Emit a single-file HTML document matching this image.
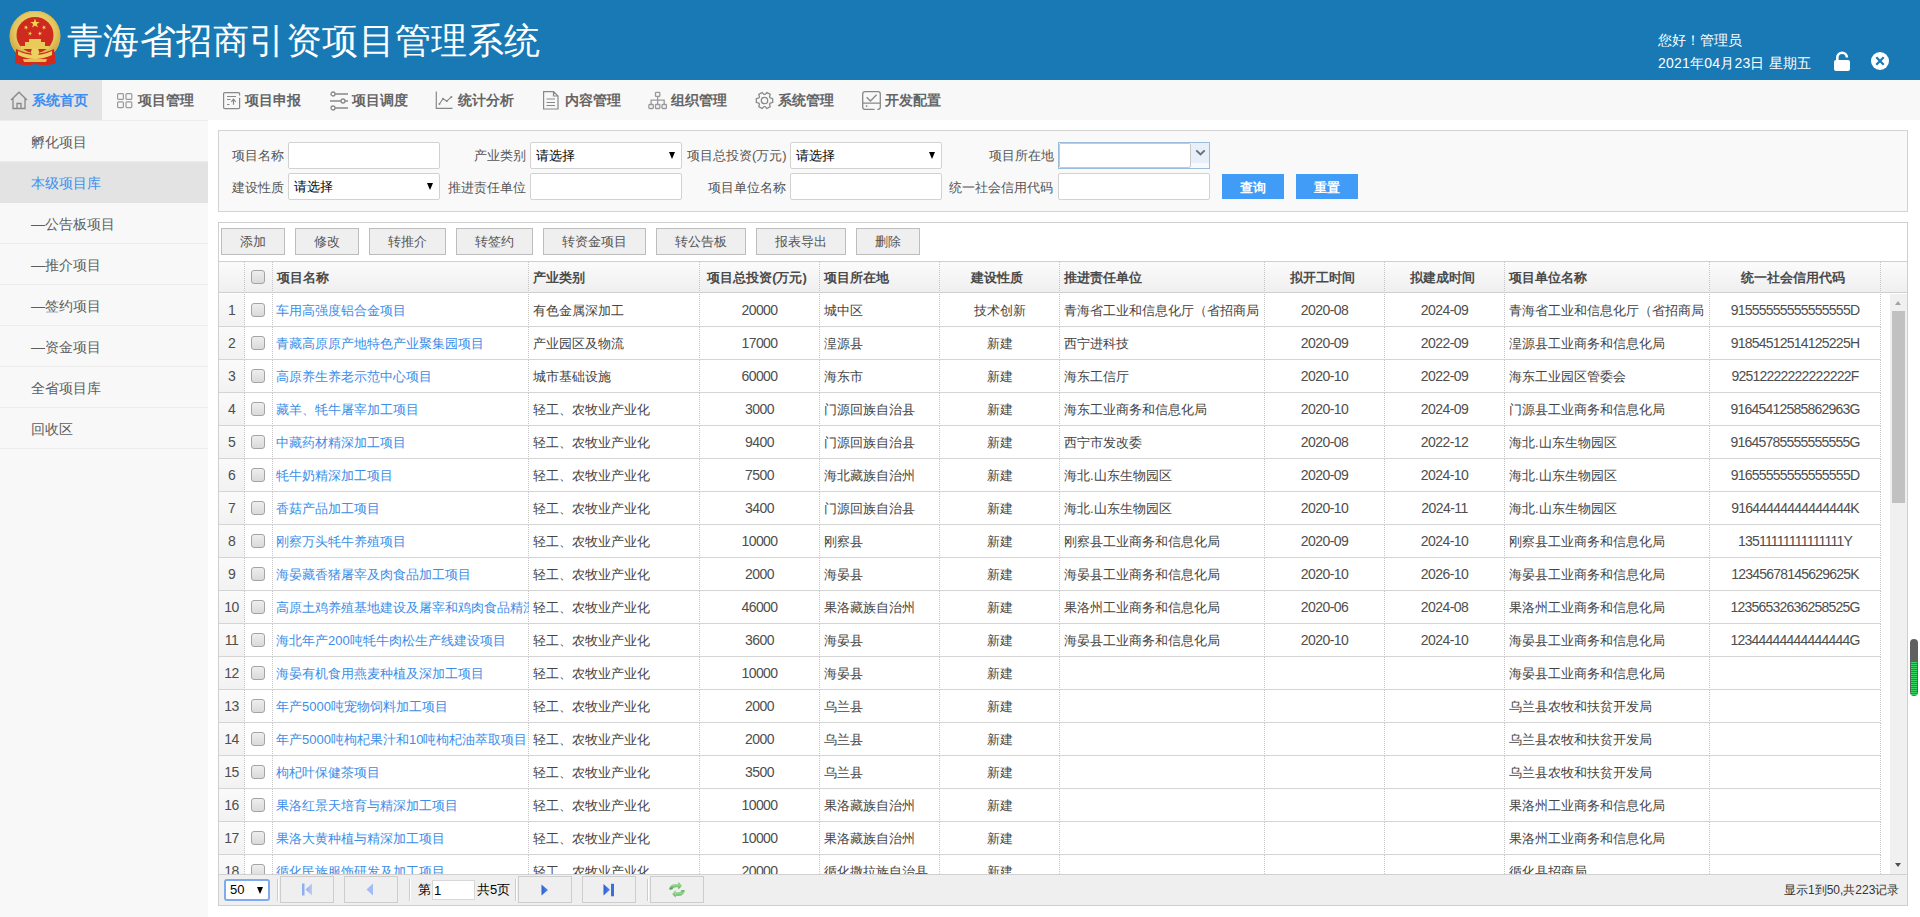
<!DOCTYPE html>
<html><head><meta charset="utf-8"><title>青海省招商引资项目管理系统</title>
<style>
*{box-sizing:border-box}
html,body{margin:0;padding:0}
body{width:1920px;height:917px;overflow:hidden;position:relative;background:#fff;font-family:"Liberation Sans",sans-serif;font-size:13px;color:#444}
.abs{position:absolute}
#hd{position:absolute;left:0;top:0;width:1920px;height:80px;background:#1879b5}
#title{position:absolute;left:67px;top:20px;font-size:36px;line-height:42px;color:#fff;white-space:nowrap;letter-spacing:0.45px}
#hello{position:absolute;left:1658px;top:30px;font-size:14px;line-height:20px;color:#fff;white-space:nowrap}
#date{position:absolute;left:1658px;top:53px;font-size:14px;line-height:20px;color:#fff;white-space:nowrap;letter-spacing:0.22px}
#nav{position:absolute;left:0;top:80px;width:1920px;height:40px;background:#f8f8f8}
.ni{position:absolute;top:0;height:40px;line-height:41px;font-size:14px;font-weight:bold;color:#656565;white-space:nowrap}
.ni svg{position:absolute}
#side{position:absolute;left:0;top:120px;width:208px;height:797px;background:#f8f8f8}
.si{position:absolute;left:0;width:208px;height:41px;border-bottom:1px solid #ececec;font-size:14px;line-height:40px;color:#5e5e5e;padding-left:31px;padding-top:1px;white-space:nowrap}
.si.act{background:#e3e3e3;color:#3c8ef0;border-bottom-color:#e3e3e3}
#search{position:absolute;left:218px;top:130px;width:1690px;height:82px;border:1px solid #d3d3d3;background:#f9f9f9}
.lb{position:absolute;font-size:13px;line-height:16px;color:#555;white-space:nowrap;text-align:right}
.ip{position:absolute;width:152px;height:27px;border:1px solid #d2d2d2;border-radius:2px;background:#fff}
.sel{font-size:13px;color:#000;line-height:25px;padding-left:5px}
.sel b{position:absolute;right:6px;top:9px;width:0;height:0;border-left:3.5px solid transparent;border-right:3.5px solid transparent;border-top:7px solid #000}
.bb{position:absolute;width:62px;height:25px;background:#419cf7;color:#fff;font-size:13px;line-height:27px;text-align:center;font-weight:bold}
#grid{position:absolute;left:218px;top:222px;width:1690px;height:684px;border:1px solid #cfcfcf;background:#fff;overflow:hidden}
.tb{position:absolute;top:5px;height:27px;border:1px solid #bdbdbd;background:#efefef;font-size:13px;line-height:26px;text-align:center;color:#555}
#tbar{position:absolute;left:0;top:0;width:1688px;height:39px;border-bottom:1px solid #d0d0d0}
.hdr{position:absolute;left:0;top:39px;width:1688px;height:31px;background:linear-gradient(#fbfbfb,#efefef);border-bottom:1px solid #cfcfcf}
.c{position:absolute;top:0;height:32px;line-height:32px;white-space:nowrap;overflow:hidden;padding:0 5px 0 4px;background:repeating-linear-gradient(#c4c4c4 0 1px,transparent 1px 2px) right top/1px 100% no-repeat}
.c.h{height:30px;line-height:32px;font-weight:bold;color:#4a4a4a}
.c.h.ac{padding:0 8px 0 2px}
.al{text-align:left}
.ac{text-align:center}
.ack{text-align:center}
.row{position:absolute;left:0;width:1662px;height:33px;border-bottom:1px solid #d4d4d4}
.row .c{height:32px;line-height:34px}
.row .c.num{line-height:32px}
.rn{background:repeating-linear-gradient(#c4c4c4 0 1px,transparent 1px 2px) right top/1px 100% no-repeat,linear-gradient(to bottom,#fafafa,#f2f2f2);padding:0 1px 0 0}
.lk{color:#3c8de8;padding-left:3px}
.num{font-size:14px;letter-spacing:-0.55px;color:#4e4e4e}
.code{letter-spacing:-0.78px}
.cb{display:inline-block;vertical-align:middle;width:14px;height:14px;border:1px solid #a4a4a4;border-radius:3px;background:linear-gradient(#eeeeee,#dadada);margin-top:-3px;margin-left:-2px}
#body{position:absolute;left:0;top:70px;width:1688px;height:581px;overflow:hidden}
#vs{position:absolute;left:1671px;top:1px;width:17px;height:580px;background:#f0f0f0}
#pager{position:absolute;left:0;top:651px;width:1688px;height:31px;border-top:1px solid #d0d0d0;background:#efefef}
.pb{position:absolute;top:1px;width:54px;height:27px;border:1px solid #cdcdcd;background:#efefef}
.sep{position:absolute;top:4px;width:2px;height:22px;border-left:1px solid #cccccc;border-right:1px solid #fff}
</style></head>
<body>
<div id="hd">
  <svg class="abs" style="left:9px;top:11px" width="54" height="56" viewBox="0 0 54 56">
    <defs>
      <radialGradient id="gold" cx="50%" cy="40%" r="60%"><stop offset="0" stop-color="#f4e58c"/><stop offset="0.7" stop-color="#e2c55c"/><stop offset="1" stop-color="#c9a23c"/></radialGradient>
    </defs>
    <circle cx="26" cy="25" r="25" fill="url(#gold)"/>
    <circle cx="26" cy="25" r="25" fill="none" stroke="#d8b84e" stroke-width="1"/>
    <ellipse cx="26" cy="24" rx="18.5" ry="18" fill="#cf2a1f"/>
    <polygon points="26.00,7.50 27.12,10.95 30.76,10.95 27.82,13.09 28.94,16.55 26.00,14.41 23.06,16.55 24.18,13.09 21.24,10.95 24.88,10.95" fill="#f3d554"/>
    <polygon points="18.20,14.42 17.84,16.13 19.35,17.00 17.61,17.18 17.25,18.89 16.54,17.29 14.81,17.48 16.10,16.31 15.39,14.72 16.90,15.59" fill="#f3d554"/>
    <polygon points="33.80,14.42 35.10,15.59 36.61,14.72 35.90,16.31 37.19,17.48 35.46,17.29 34.75,18.89 34.39,17.18 32.65,17.00 34.16,16.13" fill="#f3d554"/>
    <polygon points="21.60,20.28 21.68,21.95 23.30,22.38 21.74,22.98 21.82,24.65 20.77,23.35 19.21,23.95 20.12,22.55 19.07,21.25 20.69,21.68" fill="#f3d554"/>
    <polygon points="30.40,20.28 31.31,21.68 32.93,21.25 31.88,22.55 32.79,23.95 31.23,23.35 30.18,24.65 30.26,22.98 28.70,22.38 30.32,21.95" fill="#f3d554"/>
    <path d="M20 28 H32 V31 H36 V35 H16 V31 H20 Z" fill="#e9cb5a"/>
    <rect x="12" y="35" width="28" height="3" fill="#e9cb5a"/>
    <path d="M7 38 Q26 47 45 38 L47 52 Q36 56 26 53 Q16 56 6 52 Z" fill="#d42a1c"/>
    <path d="M9 40 Q26 48 43 40 L43 44 Q26 52 9 44 Z" fill="#ecd060"/>
    <circle cx="26" cy="41" r="4" fill="#ecd060"/>
    <path d="M14 48 H38 L37 51 H15 Z" fill="#e5c24e"/>
  </svg>
  <div id="title">青海省招商引资项目管理系统</div>
  <div id="hello">您好！管理员</div>
  <div id="date">2021年04月23日 星期五</div>
  <svg class="abs" style="left:1833px;top:50px" width="18" height="22" viewBox="0 0 18 22">
    <path d="M4.3 10.5 V7.5 A4.8 4.8 0 0 1 13.9 7.5" fill="none" stroke="#fff" stroke-width="2.6" stroke-linecap="butt"/>
    <rect x="1" y="10" width="16" height="11" rx="2" fill="#fff"/>
  </svg>
  <svg class="abs" style="left:1870px;top:51px" width="20" height="20" viewBox="0 0 20 20">
    <circle cx="10" cy="10" r="9" fill="#fff"/>
    <path d="M6.3 6.3 L13.7 13.7 M13.7 6.3 L6.3 13.7" stroke="#1879b5" stroke-width="2.2"/>
  </svg>
</div>

<div id="nav">
  <div class="abs" style="left:0;top:0;width:102px;height:40px;background:#e3e3e3"></div>
  <div class="ni" style="left:10px;color:#3c8ef0">
    <svg style="left:0;top:11px" width="18" height="19" viewBox="0 0 18 19"><path d="M1 9 L9 1.2 L17 9 M3 7.5 V17.5 H15 V7.5 M7 17.5 V12.5 H11 V17.5" fill="none" stroke="#888" stroke-width="1.3"/></svg>
    <span style="position:absolute;left:22px">系统首页</span>
  </div>
  <div class="ni" style="left:117px">
    <svg style="left:0;top:13px" width="16" height="16" viewBox="0 0 16 16"><g fill="none" stroke="#999" stroke-width="1.2"><rect x="0.6" y="0.6" width="5.8" height="5.8" rx="1"/><rect x="9" y="0.6" width="5.8" height="5.8" rx="1"/><rect x="0.6" y="8.8" width="5.8" height="5.8" rx="1"/><rect x="9" y="8.8" width="5.8" height="5.8" rx="1"/></g></svg>
    <span style="position:absolute;left:21px">项目管理</span>
  </div>
  <div class="ni" style="left:223px">
    <svg style="left:0;top:12px" width="18" height="18" viewBox="0 0 18 18"><g fill="none" stroke="#888" stroke-width="1.2"><path d="M16.6 3.4 V1.8 Q16.6 0.6 15.4 0.6 H1.8 Q0.6 0.6 0.6 1.8 V15.4 Q0.6 16.6 1.8 16.6 H15.4 Q16.6 16.6 16.6 15.4 V5.8"/><path d="M4 4.5 H13 M4 7.5 H7.5 M4 12.5 H6.5 M10.5 12.8 V7.2 M8.3 9.8 L10.5 7.2 L12.7 9.8"/></g></svg>
    <span style="position:absolute;left:22px">项目申报</span>
  </div>
  <div class="ni" style="left:329px">
    <svg style="left:0;top:11px" width="20" height="20" viewBox="0 0 20 20"><g fill="none" stroke="#888" stroke-width="1.3"><circle cx="4" cy="3" r="2"/><circle cx="14" cy="10" r="2"/><circle cx="4" cy="17" r="2"/><path d="M6 3 H19 M1 10 H12 M16 10 H19 M6 17 H19"/></g></svg>
    <span style="position:absolute;left:23px">项目调度</span>
  </div>
  <div class="ni" style="left:435px">
    <svg style="left:0;top:11px" width="18" height="19" viewBox="0 0 18 19"><g fill="none" stroke="#888" stroke-width="1.2"><path d="M1.3 0.5 V17.4 H17.5 M4.4 13 L8 7.7 L11.8 10.1 L16.4 5.9"/></g><g fill="#888"><circle cx="4.4" cy="13" r="1"/><circle cx="8" cy="7.7" r="1"/><circle cx="11.8" cy="10.1" r="1"/><circle cx="16.4" cy="5.9" r="1"/></g></svg>
    <span style="position:absolute;left:23px">统计分析</span>
  </div>
  <div class="ni" style="left:543px">
    <svg style="left:0;top:11px" width="16" height="19" viewBox="0 0 16 19"><g fill="none" stroke="#888" stroke-width="1.2"><path d="M0.6 0.6 H10.5 L15 5 V18 H0.6 Z M10.5 0.6 V5 H15 M3.5 8 H12 M3.5 11.5 H12 M3.5 14.5 H12"/></g></svg>
    <span style="position:absolute;left:22px">内容管理</span>
  </div>
  <div class="ni" style="left:648px">
    <svg style="left:0;top:10px" width="20" height="20" viewBox="0 0 20 20"><g fill="none" stroke="#999" stroke-width="1.3"><rect x="7.5" y="2.4" width="4.3" height="4" rx="0.5"/><rect x="0.9" y="14.5" width="4.4" height="4" rx="0.8"/><rect x="7.5" y="14.5" width="4.3" height="4" rx="0.5"/><rect x="14" y="14.5" width="4.4" height="4" rx="0.8"/><path d="M9.65 6.4 V14.5 M3.1 14.5 V10.2 H16.2 V14.5"/></g></svg>
    <span style="position:absolute;left:23px">组织管理</span>
  </div>
  <div class="ni" style="left:755px">
    <svg style="left:0;top:11px" width="19" height="19" viewBox="0 0 19 19"><g fill="none" stroke="#8a8a8a" stroke-width="1.3" stroke-linejoin="round"><path d="M15.16 6.98 L17.68 7.61 L17.68 11.39 L15.16 12.02 L14.52 13.14 L15.23 15.64 L11.96 17.53 L10.15 15.67 L8.85 15.67 L7.04 17.53 L3.77 15.64 L4.48 13.14 L3.84 12.02 L1.32 11.39 L1.32 7.61 L3.84 6.98 L4.48 5.86 L3.77 3.36 L7.04 1.47 L8.85 3.33 L10.15 3.33 L11.96 1.47 L15.23 3.36 L14.52 5.86 Z"/><circle cx="9.5" cy="9.5" r="3.2"/></g></svg>
    <span style="position:absolute;left:23px">系统管理</span>
  </div>
  <div class="ni" style="left:862px">
    <svg style="left:0;top:10px" width="19" height="20" viewBox="0 0 19 20"><g fill="none" stroke="#888" stroke-width="1.3"><path d="M12.6 19.3 H3 Q0.7 19.3 0.7 17 V4 Q0.7 1.7 3 1.7 H16 Q18.3 1.7 18.3 4 V17 Q18.3 19.3 16 19.3 H15.3"/><path d="M0.7 13.2 H18.3 M4.6 7.3 L8.4 11 L14.6 4.8"/></g><circle cx="4.6" cy="16.1" r="0.9" fill="#888"/></svg>
    <span style="position:absolute;left:23px">开发配置</span>
  </div>
</div>

<div id="side">
  <div class="abs" style="left:0;top:0;width:208px;height:1px;background:#ececec"></div>
  <div class="si" style="top:1px">孵化项目</div>
  <div class="si act" style="top:42px">本级项目库</div>
  <div class="si" style="top:83px">—公告板项目</div>
  <div class="si" style="top:124px">—推介项目</div>
  <div class="si" style="top:165px">—签约项目</div>
  <div class="si" style="top:206px">—资金项目</div>
  <div class="si" style="top:247px">全省项目库</div>
  <div class="si" style="top:288px">回收区</div>
</div>

<div id="search">
  <!-- origin (219,131) -->
  <div class="lb" style="left:13px;top:17px">项目名称</div>
  <div class="ip" style="left:69px;top:11px"></div>
  <div class="lb" style="left:255px;top:17px">产业类别</div>
  <div class="ip sel" style="left:311px;top:11px">请选择<b></b></div>
  <div class="lb" style="left:468px;top:17px">项目总投资(万元)</div>
  <div class="ip sel" style="left:571px;top:11px">请选择<b></b></div>
  <div class="lb" style="left:770px;top:17px">项目所在地</div>
  <div class="ip" style="left:839px;top:11px;border-color:#9cbcdc;border-radius:0;background:#f9f9f9">
    <div class="abs" style="left:0;top:0;width:132px;height:25px;border:1px solid #c9c9c9;border-radius:2px;background:#fff"></div>
    <div class="abs" style="left:132px;top:0;width:18px;height:20px;background:#e7effa"></div>
    <svg class="abs" style="left:136px;top:6px" width="11" height="8" viewBox="0 0 11 8"><path d="M1.3 1.3 L5.5 5.5 L9.7 1.3" fill="none" stroke="#6e6e6e" stroke-width="1.9"/></svg>
  </div>
  <div class="lb" style="left:13px;top:49px">建设性质</div>
  <div class="ip sel" style="left:69px;top:42px">请选择<b></b></div>
  <div class="lb" style="left:229px;top:49px">推进责任单位</div>
  <div class="ip" style="left:311px;top:42px"></div>
  <div class="lb" style="left:489px;top:49px">项目单位名称</div>
  <div class="ip" style="left:571px;top:42px"></div>
  <div class="lb" style="left:730px;top:49px">统一社会信用代码</div>
  <div class="ip" style="left:839px;top:42px"></div>
  <div class="bb" style="left:1003px;top:43px">查询</div>
  <div class="bb" style="left:1077px;top:43px">重置</div>
</div>

<div id="grid">
  <!-- origin (219,223) -->
  <div id="tbar">
    <div class="tb" style="left:2px;width:64px">添加</div>
    <div class="tb" style="left:76px;width:64px">修改</div>
    <div class="tb" style="left:150px;width:77px">转推介</div>
    <div class="tb" style="left:237px;width:77px">转签约</div>
    <div class="tb" style="left:324px;width:103px">转资金项目</div>
    <div class="tb" style="left:437px;width:90px">转公告板</div>
    <div class="tb" style="left:537px;width:90px">报表导出</div>
    <div class="tb" style="left:637px;width:64px">删除</div>
  </div>
  <div class="hdr"><div class="c h ac" style="left:0px;width:26px"></div><div class="c h ack" style="left:26px;width:28px"><i class="cb"></i></div><div class="c h al" style="left:54px;width:256px">项目名称</div><div class="c h al" style="left:310px;width:171px">产业类别</div><div class="c h ac" style="left:481px;width:120px">项目总投资(万元)</div><div class="c h al" style="left:601px;width:120px">项目所在地</div><div class="c h ac" style="left:721px;width:120px">建设性质</div><div class="c h al" style="left:841px;width:205px">推进责任单位</div><div class="c h ac" style="left:1046px;width:120px">拟开工时间</div><div class="c h ac" style="left:1166px;width:120px">拟建成时间</div><div class="c h al" style="left:1286px;width:205px">项目单位名称</div><div class="c h ac" style="left:1491px;width:171px">统一社会信用代码</div><div class="c h" style="left:1662px;width:26px;background:none"></div></div>
  <div id="body">
    <div class="row" style="top:1px"><div class="c rn num ac" style="left:0px;width:26px">1</div><div class="c  ac" style="left:26px;width:28px"><i class="cb"></i></div><div class="c lk al" style="left:54px;width:256px">车用高强度铝合金项目</div><div class="c  al" style="left:310px;width:171px">有色金属深加工</div><div class="c num ac" style="left:481px;width:120px">20000</div><div class="c  al" style="left:601px;width:120px">城中区</div><div class="c  ac" style="left:721px;width:120px">技术创新</div><div class="c  al" style="left:841px;width:205px">青海省工业和信息化厅（省招商局</div><div class="c num ac" style="left:1046px;width:120px">2020-08</div><div class="c num ac" style="left:1166px;width:120px">2024-09</div><div class="c  al" style="left:1286px;width:205px">青海省工业和信息化厅（省招商局</div><div class="c num code ac" style="left:1491px;width:171px">91555555555555555D</div></div><div class="row" style="top:34px"><div class="c rn num ac" style="left:0px;width:26px">2</div><div class="c  ac" style="left:26px;width:28px"><i class="cb"></i></div><div class="c lk al" style="left:54px;width:256px">青藏高原原产地特色产业聚集园项目</div><div class="c  al" style="left:310px;width:171px">产业园区及物流</div><div class="c num ac" style="left:481px;width:120px">17000</div><div class="c  al" style="left:601px;width:120px">湟源县</div><div class="c  ac" style="left:721px;width:120px">新建</div><div class="c  al" style="left:841px;width:205px">西宁进科技</div><div class="c num ac" style="left:1046px;width:120px">2020-09</div><div class="c num ac" style="left:1166px;width:120px">2022-09</div><div class="c  al" style="left:1286px;width:205px">湟源县工业商务和信息化局</div><div class="c num code ac" style="left:1491px;width:171px">91854512514125225H</div></div><div class="row" style="top:67px"><div class="c rn num ac" style="left:0px;width:26px">3</div><div class="c  ac" style="left:26px;width:28px"><i class="cb"></i></div><div class="c lk al" style="left:54px;width:256px">高原养生养老示范中心项目</div><div class="c  al" style="left:310px;width:171px">城市基础设施</div><div class="c num ac" style="left:481px;width:120px">60000</div><div class="c  al" style="left:601px;width:120px">海东市</div><div class="c  ac" style="left:721px;width:120px">新建</div><div class="c  al" style="left:841px;width:205px">海东工信厅</div><div class="c num ac" style="left:1046px;width:120px">2020-10</div><div class="c num ac" style="left:1166px;width:120px">2022-09</div><div class="c  al" style="left:1286px;width:205px">海东工业园区管委会</div><div class="c num code ac" style="left:1491px;width:171px">92512222222222222F</div></div><div class="row" style="top:100px"><div class="c rn num ac" style="left:0px;width:26px">4</div><div class="c  ac" style="left:26px;width:28px"><i class="cb"></i></div><div class="c lk al" style="left:54px;width:256px">藏羊、牦牛屠宰加工项目</div><div class="c  al" style="left:310px;width:171px">轻工、农牧业产业化</div><div class="c num ac" style="left:481px;width:120px">3000</div><div class="c  al" style="left:601px;width:120px">门源回族自治县</div><div class="c  ac" style="left:721px;width:120px">新建</div><div class="c  al" style="left:841px;width:205px">海东工业商务和信息化局</div><div class="c num ac" style="left:1046px;width:120px">2020-10</div><div class="c num ac" style="left:1166px;width:120px">2024-09</div><div class="c  al" style="left:1286px;width:205px">门源县工业商务和信息化局</div><div class="c num code ac" style="left:1491px;width:171px">91645412585862963G</div></div><div class="row" style="top:133px"><div class="c rn num ac" style="left:0px;width:26px">5</div><div class="c  ac" style="left:26px;width:28px"><i class="cb"></i></div><div class="c lk al" style="left:54px;width:256px">中藏药材精深加工项目</div><div class="c  al" style="left:310px;width:171px">轻工、农牧业产业化</div><div class="c num ac" style="left:481px;width:120px">9400</div><div class="c  al" style="left:601px;width:120px">门源回族自治县</div><div class="c  ac" style="left:721px;width:120px">新建</div><div class="c  al" style="left:841px;width:205px">西宁市发改委</div><div class="c num ac" style="left:1046px;width:120px">2020-08</div><div class="c num ac" style="left:1166px;width:120px">2022-12</div><div class="c  al" style="left:1286px;width:205px">海北.山东生物园区</div><div class="c num code ac" style="left:1491px;width:171px">91645785555555555G</div></div><div class="row" style="top:166px"><div class="c rn num ac" style="left:0px;width:26px">6</div><div class="c  ac" style="left:26px;width:28px"><i class="cb"></i></div><div class="c lk al" style="left:54px;width:256px">牦牛奶精深加工项目</div><div class="c  al" style="left:310px;width:171px">轻工、农牧业产业化</div><div class="c num ac" style="left:481px;width:120px">7500</div><div class="c  al" style="left:601px;width:120px">海北藏族自治州</div><div class="c  ac" style="left:721px;width:120px">新建</div><div class="c  al" style="left:841px;width:205px">海北.山东生物园区</div><div class="c num ac" style="left:1046px;width:120px">2020-09</div><div class="c num ac" style="left:1166px;width:120px">2024-10</div><div class="c  al" style="left:1286px;width:205px">海北.山东生物园区</div><div class="c num code ac" style="left:1491px;width:171px">91655555555555555D</div></div><div class="row" style="top:199px"><div class="c rn num ac" style="left:0px;width:26px">7</div><div class="c  ac" style="left:26px;width:28px"><i class="cb"></i></div><div class="c lk al" style="left:54px;width:256px">香菇产品加工项目</div><div class="c  al" style="left:310px;width:171px">轻工、农牧业产业化</div><div class="c num ac" style="left:481px;width:120px">3400</div><div class="c  al" style="left:601px;width:120px">门源回族自治县</div><div class="c  ac" style="left:721px;width:120px">新建</div><div class="c  al" style="left:841px;width:205px">海北.山东生物园区</div><div class="c num ac" style="left:1046px;width:120px">2020-10</div><div class="c num ac" style="left:1166px;width:120px">2024-11</div><div class="c  al" style="left:1286px;width:205px">海北.山东生物园区</div><div class="c num code ac" style="left:1491px;width:171px">91644444444444444K</div></div><div class="row" style="top:232px"><div class="c rn num ac" style="left:0px;width:26px">8</div><div class="c  ac" style="left:26px;width:28px"><i class="cb"></i></div><div class="c lk al" style="left:54px;width:256px">刚察万头牦牛养殖项目</div><div class="c  al" style="left:310px;width:171px">轻工、农牧业产业化</div><div class="c num ac" style="left:481px;width:120px">10000</div><div class="c  al" style="left:601px;width:120px">刚察县</div><div class="c  ac" style="left:721px;width:120px">新建</div><div class="c  al" style="left:841px;width:205px">刚察县工业商务和信息化局</div><div class="c num ac" style="left:1046px;width:120px">2020-09</div><div class="c num ac" style="left:1166px;width:120px">2024-10</div><div class="c  al" style="left:1286px;width:205px">刚察县工业商务和信息化局</div><div class="c num code ac" style="left:1491px;width:171px">13511111111111111Y</div></div><div class="row" style="top:265px"><div class="c rn num ac" style="left:0px;width:26px">9</div><div class="c  ac" style="left:26px;width:28px"><i class="cb"></i></div><div class="c lk al" style="left:54px;width:256px">海晏藏香猪屠宰及肉食品加工项目</div><div class="c  al" style="left:310px;width:171px">轻工、农牧业产业化</div><div class="c num ac" style="left:481px;width:120px">2000</div><div class="c  al" style="left:601px;width:120px">海晏县</div><div class="c  ac" style="left:721px;width:120px">新建</div><div class="c  al" style="left:841px;width:205px">海晏县工业商务和信息化局</div><div class="c num ac" style="left:1046px;width:120px">2020-10</div><div class="c num ac" style="left:1166px;width:120px">2026-10</div><div class="c  al" style="left:1286px;width:205px">海晏县工业商务和信息化局</div><div class="c num code ac" style="left:1491px;width:171px">12345678145629625K</div></div><div class="row" style="top:298px"><div class="c rn num ac" style="left:0px;width:26px">10</div><div class="c  ac" style="left:26px;width:28px"><i class="cb"></i></div><div class="c lk al" style="left:54px;width:256px">高原土鸡养殖基地建设及屠宰和鸡肉食品精深加工项目</div><div class="c  al" style="left:310px;width:171px">轻工、农牧业产业化</div><div class="c num ac" style="left:481px;width:120px">46000</div><div class="c  al" style="left:601px;width:120px">果洛藏族自治州</div><div class="c  ac" style="left:721px;width:120px">新建</div><div class="c  al" style="left:841px;width:205px">果洛州工业商务和信息化局</div><div class="c num ac" style="left:1046px;width:120px">2020-06</div><div class="c num ac" style="left:1166px;width:120px">2024-08</div><div class="c  al" style="left:1286px;width:205px">果洛州工业商务和信息化局</div><div class="c num code ac" style="left:1491px;width:171px">12356532636258525G</div></div><div class="row" style="top:331px"><div class="c rn num ac" style="left:0px;width:26px">11</div><div class="c  ac" style="left:26px;width:28px"><i class="cb"></i></div><div class="c lk al" style="left:54px;width:256px">海北年产200吨牦牛肉松生产线建设项目</div><div class="c  al" style="left:310px;width:171px">轻工、农牧业产业化</div><div class="c num ac" style="left:481px;width:120px">3600</div><div class="c  al" style="left:601px;width:120px">海晏县</div><div class="c  ac" style="left:721px;width:120px">新建</div><div class="c  al" style="left:841px;width:205px">海晏县工业商务和信息化局</div><div class="c num ac" style="left:1046px;width:120px">2020-10</div><div class="c num ac" style="left:1166px;width:120px">2024-10</div><div class="c  al" style="left:1286px;width:205px">海晏县工业商务和信息化局</div><div class="c num code ac" style="left:1491px;width:171px">12344444444444444G</div></div><div class="row" style="top:364px"><div class="c rn num ac" style="left:0px;width:26px">12</div><div class="c  ac" style="left:26px;width:28px"><i class="cb"></i></div><div class="c lk al" style="left:54px;width:256px">海晏有机食用燕麦种植及深加工项目</div><div class="c  al" style="left:310px;width:171px">轻工、农牧业产业化</div><div class="c num ac" style="left:481px;width:120px">10000</div><div class="c  al" style="left:601px;width:120px">海晏县</div><div class="c  ac" style="left:721px;width:120px">新建</div><div class="c  al" style="left:841px;width:205px"></div><div class="c num ac" style="left:1046px;width:120px"></div><div class="c num ac" style="left:1166px;width:120px"></div><div class="c  al" style="left:1286px;width:205px">海晏县工业商务和信息化局</div><div class="c num code ac" style="left:1491px;width:171px"></div></div><div class="row" style="top:397px"><div class="c rn num ac" style="left:0px;width:26px">13</div><div class="c  ac" style="left:26px;width:28px"><i class="cb"></i></div><div class="c lk al" style="left:54px;width:256px">年产5000吨宠物饲料加工项目</div><div class="c  al" style="left:310px;width:171px">轻工、农牧业产业化</div><div class="c num ac" style="left:481px;width:120px">2000</div><div class="c  al" style="left:601px;width:120px">乌兰县</div><div class="c  ac" style="left:721px;width:120px">新建</div><div class="c  al" style="left:841px;width:205px"></div><div class="c num ac" style="left:1046px;width:120px"></div><div class="c num ac" style="left:1166px;width:120px"></div><div class="c  al" style="left:1286px;width:205px">乌兰县农牧和扶贫开发局</div><div class="c num code ac" style="left:1491px;width:171px"></div></div><div class="row" style="top:430px"><div class="c rn num ac" style="left:0px;width:26px">14</div><div class="c  ac" style="left:26px;width:28px"><i class="cb"></i></div><div class="c lk al" style="left:54px;width:256px">年产5000吨枸杞果汁和10吨枸杞油萃取项目</div><div class="c  al" style="left:310px;width:171px">轻工、农牧业产业化</div><div class="c num ac" style="left:481px;width:120px">2000</div><div class="c  al" style="left:601px;width:120px">乌兰县</div><div class="c  ac" style="left:721px;width:120px">新建</div><div class="c  al" style="left:841px;width:205px"></div><div class="c num ac" style="left:1046px;width:120px"></div><div class="c num ac" style="left:1166px;width:120px"></div><div class="c  al" style="left:1286px;width:205px">乌兰县农牧和扶贫开发局</div><div class="c num code ac" style="left:1491px;width:171px"></div></div><div class="row" style="top:463px"><div class="c rn num ac" style="left:0px;width:26px">15</div><div class="c  ac" style="left:26px;width:28px"><i class="cb"></i></div><div class="c lk al" style="left:54px;width:256px">枸杞叶保健茶项目</div><div class="c  al" style="left:310px;width:171px">轻工、农牧业产业化</div><div class="c num ac" style="left:481px;width:120px">3500</div><div class="c  al" style="left:601px;width:120px">乌兰县</div><div class="c  ac" style="left:721px;width:120px">新建</div><div class="c  al" style="left:841px;width:205px"></div><div class="c num ac" style="left:1046px;width:120px"></div><div class="c num ac" style="left:1166px;width:120px"></div><div class="c  al" style="left:1286px;width:205px">乌兰县农牧和扶贫开发局</div><div class="c num code ac" style="left:1491px;width:171px"></div></div><div class="row" style="top:496px"><div class="c rn num ac" style="left:0px;width:26px">16</div><div class="c  ac" style="left:26px;width:28px"><i class="cb"></i></div><div class="c lk al" style="left:54px;width:256px">果洛红景天培育与精深加工项目</div><div class="c  al" style="left:310px;width:171px">轻工、农牧业产业化</div><div class="c num ac" style="left:481px;width:120px">10000</div><div class="c  al" style="left:601px;width:120px">果洛藏族自治州</div><div class="c  ac" style="left:721px;width:120px">新建</div><div class="c  al" style="left:841px;width:205px"></div><div class="c num ac" style="left:1046px;width:120px"></div><div class="c num ac" style="left:1166px;width:120px"></div><div class="c  al" style="left:1286px;width:205px">果洛州工业商务和信息化局</div><div class="c num code ac" style="left:1491px;width:171px"></div></div><div class="row" style="top:529px"><div class="c rn num ac" style="left:0px;width:26px">17</div><div class="c  ac" style="left:26px;width:28px"><i class="cb"></i></div><div class="c lk al" style="left:54px;width:256px">果洛大黄种植与精深加工项目</div><div class="c  al" style="left:310px;width:171px">轻工、农牧业产业化</div><div class="c num ac" style="left:481px;width:120px">10000</div><div class="c  al" style="left:601px;width:120px">果洛藏族自治州</div><div class="c  ac" style="left:721px;width:120px">新建</div><div class="c  al" style="left:841px;width:205px"></div><div class="c num ac" style="left:1046px;width:120px"></div><div class="c num ac" style="left:1166px;width:120px"></div><div class="c  al" style="left:1286px;width:205px">果洛州工业商务和信息化局</div><div class="c num code ac" style="left:1491px;width:171px"></div></div><div class="row" style="top:562px"><div class="c rn num ac" style="left:0px;width:26px">18</div><div class="c  ac" style="left:26px;width:28px"><i class="cb"></i></div><div class="c lk al" style="left:54px;width:256px">循化民族服饰研发及加工项目</div><div class="c  al" style="left:310px;width:171px">轻工、农牧业产业化</div><div class="c num ac" style="left:481px;width:120px">20000</div><div class="c  al" style="left:601px;width:120px">循化撒拉族自治县</div><div class="c  ac" style="left:721px;width:120px">新建</div><div class="c  al" style="left:841px;width:205px"></div><div class="c num ac" style="left:1046px;width:120px"></div><div class="c num ac" style="left:1166px;width:120px"></div><div class="c  al" style="left:1286px;width:205px">循化县招商局</div><div class="c num code ac" style="left:1491px;width:171px"></div></div>
    <div id="vs">
      <div class="abs" style="left:5px;top:7px;width:0;height:0;border-left:3.5px solid transparent;border-right:3.5px solid transparent;border-bottom:4px solid #a3a3a3"></div>
      <div class="abs" style="left:2px;top:17px;width:13px;height:192px;background:#c1c1c1"></div>
      <div class="abs" style="left:5px;top:569px;width:0;height:0;border-left:3.5px solid transparent;border-right:3.5px solid transparent;border-top:4px solid #505050"></div>
    </div>
  </div>
  <div id="pager">
    <!-- origin (219,875) -->
    <div class="abs" style="left:5px;top:4px;width:46px;height:22px;border:2px solid #80a9ef;border-radius:3px;background:#fff;font-size:13px;line-height:18px;padding-left:4px;color:#000">50<span class="abs" style="left:31px;top:6px;width:0;height:0;border-left:3.5px solid transparent;border-right:3.5px solid transparent;border-top:7px solid #000"></span></div>
    <div class="sep" style="left:58px"></div>
    <div class="pb" style="left:61px">
      <svg class="abs" style="left:21px;top:6px" width="12" height="13" viewBox="0 0 12 13"><defs><linearGradient id="gb1" x1="0" x2="1"><stop offset="0" stop-color="#8fb0ef"/><stop offset="1" stop-color="#b8cdf5"/></linearGradient></defs><rect x="0" y="0.5" width="2.5" height="12" fill="#8eaef0"/><path d="M10 0.5 V12.5 L3.5 6.5 Z" fill="url(#gb1)"/></svg>
    </div>
    <div class="pb" style="left:125px">
      <svg class="abs" style="left:21px;top:6px" width="10" height="13" viewBox="0 0 10 13"><path d="M7 0.5 V12.5 L0.5 6.5 Z" fill="#a2bdf2"/></svg>
    </div>
    <div class="sep" style="left:190px"></div>
    <div class="abs" style="left:199px;top:7px;font-size:13px;line-height:16px;color:#000">第</div>
    <div class="abs" style="left:213px;top:5px;width:43px;height:20px;border:1px solid #d8d8d8;background:#fff;font-size:13px;line-height:20px;padding-left:1px;color:#000">1</div>
    <div class="abs" style="left:258px;top:7px;font-size:13px;line-height:16px;color:#000">共5页</div>
    <div class="sep" style="left:296px"></div>
    <div class="pb" style="left:299px">
      <svg class="abs" style="left:22px;top:7px" width="8" height="12" viewBox="0 0 8 12"><defs><linearGradient id="gb2" x1="0" x2="1"><stop offset="0" stop-color="#2f5fd0"/><stop offset="1" stop-color="#4a8af0"/></linearGradient></defs><path d="M0.5 0.5 V11.5 L7 6 Z" fill="url(#gb2)"/></svg>
    </div>
    <div class="pb" style="left:363px">
      <svg class="abs" style="left:20px;top:6px" width="12" height="14" viewBox="0 0 12 14"><path d="M0.5 1 V12.5 L7 6.8 Z" fill="url(#gb2)"/><rect x="8" y="0.8" width="3" height="12.5" fill="#3a6fdc"/></svg>
    </div>
    <div class="sep" style="left:428px"></div>
    <div class="pb" style="left:431px">
      <svg class="abs" style="left:17px;top:4px" width="19" height="19" viewBox="0 0 19 19"><defs><linearGradient id="gg1" x1="0" y1="0" x2="0" y2="1"><stop offset="0" stop-color="#5fb85a"/><stop offset="0.45" stop-color="#96d48f"/><stop offset="1" stop-color="#3f9440"/></linearGradient></defs><g fill="url(#gg1)"><path d="M1.1 8.5 Q1.8 3.2 7 3.2 H10.6 V6.3 H7.5 Q5 6.3 4.2 8.5 Z M10.4 1 L14 4.8 L10.4 8.6 Z"/><path d="M16.8 9 Q16.2 14.8 11 14.8 H7.4 V11.2 H10.5 Q13 11.2 13.6 9 Z M7.6 9.3 L4.1 12.9 L7.6 16.6 Z"/></g></svg>
    </div>
    <div class="abs" style="left:1565px;top:7px;font-size:12px;line-height:16px;color:#333;white-space:nowrap">显示1到50,共223记录</div>
  </div>
</div>

<!-- floating widget -->
<div class="abs" style="left:1910px;top:639px;width:8px;height:57px;border-radius:4px;background:#606060;overflow:hidden">
  <div class="abs" style="left:1px;top:23px;width:6px;height:33px;background:repeating-linear-gradient(#38d460 0 1px,#4a7a55 1px 2px)"></div>
</div>
</body></html>
